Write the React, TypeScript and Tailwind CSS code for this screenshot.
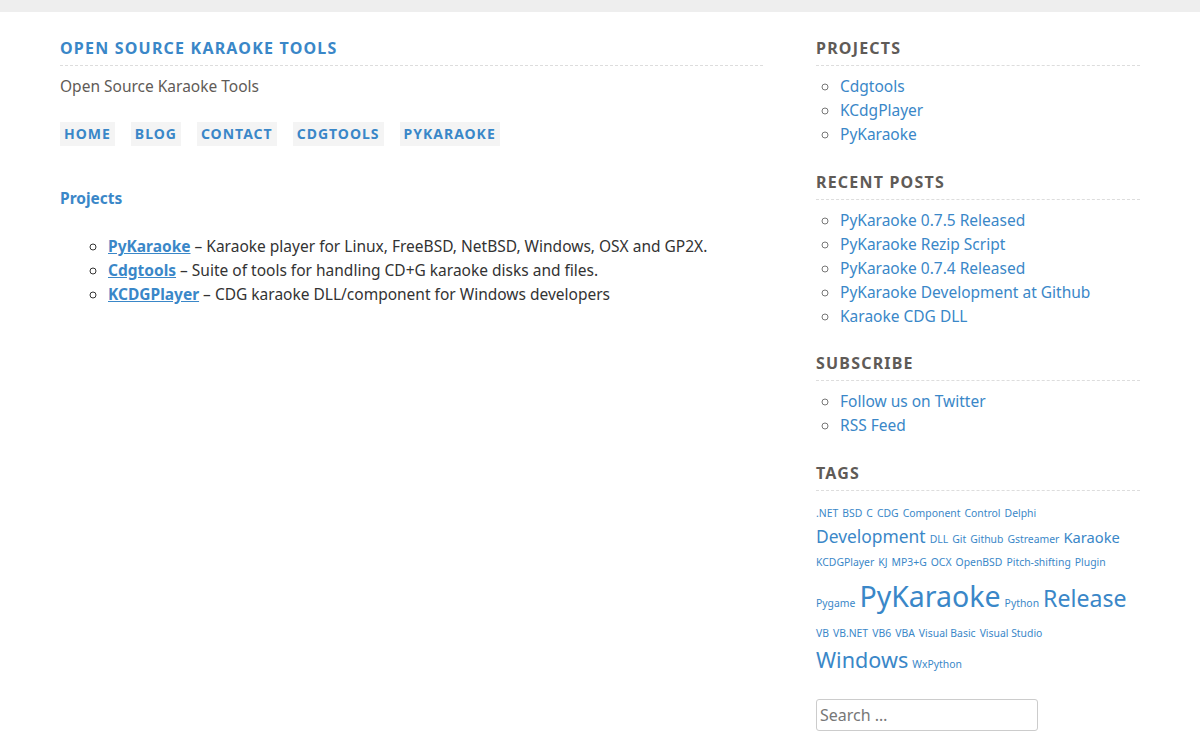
const font = "[font-family:'Noto_Sans',sans-serif]";

const tags: [string, number, number?][] = [
  [".NET", 10.4], ["BSD", 10.4], ["C", 10.4], ["CDG", 10.4], ["Component", 10.4], ["Control", 10.4], ["Delphi", 10.4],
  ["Development", 17.4], ["DLL", 10.4], ["Git", 10.4], ["Github", 10.4], ["Gstreamer", 10.4], ["Karaoke", 14.7],
  ["KCDGPlayer", 10.4], ["KJ", 10.4], ["MP3+G", 10.4], ["OCX", 10.4], ["OpenBSD", 10.4], ["Pitch-shifting", 10.4], ["Plugin", 10.4],
  ["Pygame", 10.4], ["PyKaraoke", 28.5, 47], ["Python", 10.4], ["Release", 23.1],
  ["VB", 10.4], ["VB.NET", 10.4], ["VB6", 10.4], ["VBA", 10.4], ["Visual Basic", 10.4], ["Visual Studio", 10.4],
  ["Windows", 21.6, 34.5], ["WxPython", 10.4],
];

function WidgetTitle({ children }: { children: string }) {
  return (
    <h3 className="border-b border-dashed border-[#dddddd] pb-[6px] text-[16px] leading-[22px] font-bold uppercase tracking-[1.2px] text-[#5f5b57]">
      {children}
    </h3>
  );
}

function LinkList({ items }: { items: string[] }) {
  return (
    <ul className="mt-2 list-[circle] pl-6 text-[#777777]">
      {items.map((item) => (
        <li key={item} className="h-6 leading-6">
          <a className="text-[#3a87c8]">{item}</a>
        </li>
      ))}
    </ul>
  );
}

export default function App() {
  return (
    <div className={`${font} h-[740px] overflow-hidden bg-white text-[15.5px] text-[#333333]`}>
      <div className="h-3 bg-[#eeeeee]" />
      <div className="flex gap-[53px] px-[60px] pt-[25px]">
        <main className="w-[703px]">
          <header className="border-b border-dashed border-[#dddddd] pb-[6px]">
            <h1 className="text-[16px] leading-[22px] font-bold uppercase tracking-[1.2px] text-[#3a87c8]">
              Open Source Karaoke Tools
            </h1>
          </header>
          <p className="mt-[8px] leading-6 text-[#5f5b57]">Open Source Karaoke Tools</p>
          <nav className="mt-[24px] flex gap-4">
            {["Home", "Blog", "Contact", "CDGTools", "PyKaraoke"].map((item) => (
              <a key={item} className="bg-[#f4f4f4] px-1 text-[14px] leading-6 font-bold uppercase tracking-[1px] text-[#3a87c8]">
                {item}
              </a>
            ))}
          </nav>
          <h2 className="mt-[40px] leading-6 font-bold text-[#3a87c8]">Projects</h2>
          <ul className="mt-[24px] list-[circle] pl-12 leading-6">
            <li>
              <a className="font-bold text-[#3a87c8] underline">PyKaraoke</a> – Karaoke player for Linux, FreeBSD, NetBSD, Windows, OSX and GP2X.
            </li>
            <li>
              <a className="font-bold text-[#3a87c8] underline">Cdgtools</a> – Suite of tools for handling CD+G karaoke disks and files.
            </li>
            <li>
              <a className="font-bold text-[#3a87c8] underline">KCDGPlayer</a> – CDG karaoke DLL/component for Windows developers
            </li>
          </ul>
        </main>
        <aside className="w-[324px]">
          <WidgetTitle>Projects</WidgetTitle>
          <LinkList items={["Cdgtools", "KCdgPlayer", "PyKaraoke"]} />
          <div className="mt-[24.67px]">
            <WidgetTitle>Recent Posts</WidgetTitle>
          </div>
          <LinkList items={["PyKaraoke 0.7.5 Released", "PyKaraoke Rezip Script", "PyKaraoke 0.7.4 Released", "PyKaraoke Development at Github", "Karaoke CDG DLL"]} />
          <div className="mt-[24.67px]">
            <WidgetTitle>Subscribe</WidgetTitle>
          </div>
          <LinkList items={["Follow us on Twitter", "RSS Feed"]} />
          <div className="mt-[24.67px]">
            <WidgetTitle>Tags</WidgetTitle>
          </div>
          <p className="mt-[9px] pr-1 leading-[1.5] text-[#3a87c8]">
            {tags.map(([name, size, lineHeight]) => (
              <span key={name}>
                <a style={{ fontSize: size, lineHeight: lineHeight ? `${lineHeight}px` : undefined }}>{name}</a>{" "}
              </span>
            ))}
          </p>
          <input
            readOnly
            placeholder="Search …"
            className="mt-[22px] h-8 w-[222px] rounded-[3px] border border-[#cccccc] px-[3px] text-[16px] text-[#666666] placeholder:text-[#777777]"
          />
        </aside>
      </div>
    </div>
  );
}
